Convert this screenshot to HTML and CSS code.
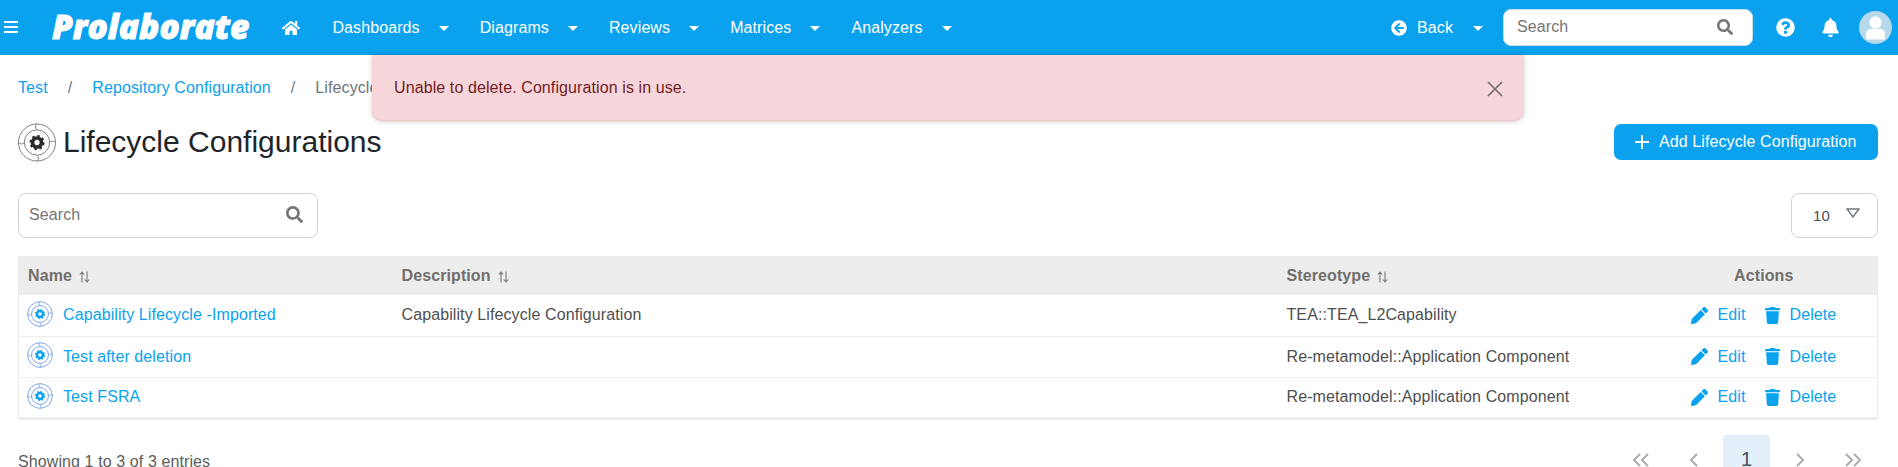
FILE: index.html
```html
<!DOCTYPE html>
<html lang="en">
<head>
<meta charset="utf-8">
<title>Lifecycle Configurations</title>
<link rel="stylesheet" href="styles.css">
</head>
<body>
<svg class="defs" width="0" height="0" aria-hidden="true">
  <symbol id="i-search" viewBox="0 0 512 512"><path d="M505 442.7L405.3 343c-4.5-4.5-10.6-7-17-7H372c27.6-35.3 44-79.7 44-128C416 93.1 322.9 0 208 0S0 93.1 0 208s93.1 208 208 208c48.3 0 92.7-16.4 128-44v16.3c0 6.4 2.5 12.5 7 17l99.7 99.7c9.4 9.4 24.6 9.4 33.9 0l28.3-28.3c9.4-9.4 9.4-24.6.1-34zM208 336c-70.7 0-128-57.2-128-128 0-70.7 57.2-128 128-128 70.7 0 128 57.2 128 128 0 70.7-57.2 128-128 128z"/></symbol>
  <symbol id="i-pencil" viewBox="0 0 512 512"><path d="M497.9 142.1l-46.1 46.1c-4.7 4.7-12.3 4.7-17 0l-111-111c-4.7-4.7-4.7-12.3 0-17l46.1-46.1c18.7-18.7 49.1-18.7 67.9 0l60.1 60.1c18.8 18.7 18.8 49.1 0 67.9zM284.2 99.8L21.6 362.4.4 483.9c-2.9 16.4 11.4 30.6 27.8 27.8l121.5-21.3 262.6-262.6c4.7-4.7 4.7-12.3 0-17l-111-111c-4.8-4.7-12.4-4.7-17.1 0z"/></symbol>
  <symbol id="i-trash" viewBox="0 0 448 512"><path d="M432 32H312l-9.4-18.7A24 24 0 0 0 281.1 0H166.8a23.72 23.72 0 0 0-21.4 13.3L136 32H16A16 16 0 0 0 0 48v32a16 16 0 0 0 16 16h416a16 16 0 0 0 16-16V48a16 16 0 0 0-16-16zM53.2 467a48 48 0 0 0 47.9 45h245.8a48 48 0 0 0 47.9-45L416 128H32z"/></symbol>
  <symbol id="i-sort" viewBox="0 0 11 12"><path d="M3 11.500V1M.8 3.500L3 1l2.200 2.500M8 .5V11M5.800 8.500L8 11l2.200-2.500"/></symbol>
  <symbol id="i-life" viewBox="0 0 40 40">
    <g class="rings">
      <circle cx="20" cy="20" r="19"/>
      <circle cx="20" cy="20" r="13"/>
      <path d="M20 1c-2 2-2 4 0 6M39 20c-2-2-4-2-6 0M20 39c2-2 2-4 0-6M1 20c2 2 4 2 6 0"/>
    </g>
    <g class="gear">
      <circle cx="20" cy="20" r="4.600" stroke-width="3.800"/>
      <circle cx="20" cy="20" r="6.800" stroke-width="2" stroke-dasharray="2.670 2.670"/>
    </g>
  </symbol>
</svg>

<header class="topbar">
  <button class="burger" aria-label="Menu"><span></span><span></span><span></span></button>
  <a class="logo">Prolaborate</a>
  <svg class="home" viewBox="0 0 576 512"><path d="M280.37 148.26L96 300.11V464a16 16 0 0 0 16 16l112.06-.29a16 16 0 0 0 15.92-16V368a16 16 0 0 1 16-16h64a16 16 0 0 1 16 16v95.64a16 16 0 0 0 16 16.05L464 480a16 16 0 0 0 16-16V300L295.67 148.26a12.19 12.19 0 0 0-15.3 0zM571.6 251.47L488 182.56V44.05a12 12 0 0 0-12-12h-56a12 12 0 0 0-12 12v72.61L318.47 43a48 48 0 0 0-61 0L4.34 251.47a12 12 0 0 0-1.6 16.9l25.5 31A12 12 0 0 0 45.15 301l235.22-193.74a12.19 12.19 0 0 1 15.3 0L530.9 301a12 12 0 0 0 16.9-1.6l25.5-31a12 12 0 0 0-1.7-16.93z"/></svg>
  <nav class="nav">
    <a class="nav-item">Dashboards<i class="caret"></i></a>
    <a class="nav-item">Diagrams<i class="caret"></i></a>
    <a class="nav-item">Reviews<i class="caret"></i></a>
    <a class="nav-item">Matrices<i class="caret"></i></a>
    <a class="nav-item">Analyzers<i class="caret"></i></a>
  </nav>
  <div class="top-right">
    <a class="back">
      <svg class="back-icon" viewBox="0 0 512 512"><path d="M256 504C119 504 8 393 8 256S119 8 256 8s248 111 248 248-111 248-248 248zm28.9-143.6L209.4 288H392c13.3 0 24-10.7 24-24v-16c0-13.3-10.7-24-24-24H209.4l75.5-72.4c9.7-9.3 9.900-24.800.4-34.300l-11-10.900c-9.400-9.400-24.600-9.400-33.900 0L107.700 239c-9.400 9.400-9.400 24.600 0 33.900l132.700 132.700c9.400 9.400 24.600 9.400 33.900 0l11-10.900c9.500-9.500 9.300-25-.4-34.300z"/></svg>
      Back<i class="caret"></i>
    </a>
    <div class="top-search">
      <span class="ph">Search</span>
      <svg class="search-icon"><use href="#i-search"/></svg>
    </div>
    <svg class="top-icon" viewBox="0 0 512 512"><path d="M504 256c0 136.997-111.043 248-248 248S8 392.997 8 256C8 119.083 119.043 8 256 8s248 111.083 248 248zM262.655 90c-54.497 0-89.255 22.957-116.549 63.758-3.536 5.286-2.353 12.415 2.715 16.258l34.699 26.31c5.205 3.947 12.621 3.008 16.665-2.122 17.864-22.658 30.113-35.797 57.303-35.797 20.429 0 45.698 13.148 45.698 32.958 0 14.976-12.363 22.667-32.534 33.976C247.128 238.528 216 254.941 216 296v4c0 6.627 5.373 12 12 12h56c6.627 0 12-5.373 12-12v-1.333c0-28.462 83.186-29.647 83.186-106.667 0-58.002-60.165-102-116.531-102zM256 338c-25.365 0-46 20.635-46 46 0 25.364 20.635 46 46 46s46-20.636 46-46c0-25.365-20.635-46-46-46z"/></svg>
    <svg class="top-icon bell" viewBox="0 0 448 512"><path d="M224 512c35.32 0 63.970-28.650 63.970-64H160.030c0 35.350 28.650 64 63.970 64zm215.390-149.710c-19.320-20.760-55.470-51.990-55.470-154.290 0-77.700-54.480-139.900-127.940-155.160V32c0-17.670-14.320-32-31.980-32s-31.980 14.330-31.980 32v20.840C118.560 68.100 64.080 130.300 64.080 208c0 102.300-36.150 133.530-55.470 154.290-6 6.450-8.660 14.160-8.610 21.710.11 16.400 12.980 32 32.100 32h383.800c19.120 0 32-15.600 32.100-32 .05-7.550-2.610-15.270-8.610-21.710z"/></svg>
    <svg class="avatar" viewBox="0 0 33 33"><circle cx="16.500" cy="16.500" r="16.500" fill="#b5d8ea"/><ellipse cx="16.500" cy="11.500" rx="6" ry="6.300" fill="#fff"/><path d="M7 27v-4c0-3 2.500-5 5.500-5h8c3 0 5.500 2 5.500 5v4c0 1-1 1.500-2 1.500H9c-1 0-2-.5-2-1.500z" fill="#fff"/></svg>
  </div>
</header>

<div class="alert">
  <span>Unable to delete. Configuration is in use.</span>
  <svg class="alert-close" viewBox="0 0 16 16"><path d="M1 1l14 14M15 1L1 15"/></svg>
</div>

<main class="page">
  <ol class="crumbs">
    <li><a>Test</a></li>
    <li class="sep">/</li>
    <li><a>Repository Configuration</a></li>
    <li class="sep">/</li>
    <li class="current">Lifecycle</li>
  </ol>

  <div class="title-row">
    <h1 class="title"><svg class="title-icon"><use href="#i-life"/></svg>Lifecycle Configurations</h1>
    <button class="add-btn"><svg class="plus" viewBox="0 0 14 14"><path d="M7 0v14M0 7h14"/></svg>Add Lifecycle Configuration</button>
  </div>

  <div class="tools">
    <div class="search-box">
      <span class="ph">Search</span>
      <svg class="search-icon big"><use href="#i-search"/></svg>
    </div>
    <div class="page-size">10<svg class="tri" viewBox="0 0 14 10"><path d="M1 1h12L7 9z"/></svg></div>
  </div>

  <table class="grid">
    <colgroup><col class="c1"><col class="c2"><col class="c3"><col class="c4"></colgroup>
    <thead>
      <tr>
        <th>Name<svg class="sort"><use href="#i-sort"/></svg></th>
        <th>Description<svg class="sort"><use href="#i-sort"/></svg></th>
        <th>Stereotype<svg class="sort"><use href="#i-sort"/></svg></th>
        <th class="center">Actions</th>
      </tr>
    </thead>
    <tbody>
      <tr>
        <td><a class="name"><svg class="row-icon"><use href="#i-life"/></svg>Capability Lifecycle -Imported</a></td>
        <td>Capability Lifecycle Configuration</td>
        <td>TEA::TEA_L2Capability</td>
        <td><div class="acts"><a class="act"><svg class="pen"><use href="#i-pencil"/></svg>Edit</a><a class="act"><svg class="bin"><use href="#i-trash"/></svg>Delete</a></div></td>
      </tr>
      <tr>
        <td><a class="name"><svg class="row-icon"><use href="#i-life"/></svg>Test after deletion</a></td>
        <td></td>
        <td>Re-metamodel::Application Component</td>
        <td><div class="acts"><a class="act"><svg class="pen"><use href="#i-pencil"/></svg>Edit</a><a class="act"><svg class="bin"><use href="#i-trash"/></svg>Delete</a></div></td>
      </tr>
      <tr>
        <td><a class="name"><svg class="row-icon"><use href="#i-life"/></svg>Test FSRA</a></td>
        <td></td>
        <td>Re-metamodel::Application Component</td>
        <td><div class="acts"><a class="act"><svg class="pen"><use href="#i-pencil"/></svg>Edit</a><a class="act"><svg class="bin"><use href="#i-trash"/></svg>Delete</a></div></td>
      </tr>
    </tbody>
  </table>

  <div class="foot">
    <span class="info">Showing 1 to 3 of 3 entries</span>
    <div class="pager">
      <span class="pg-item"><svg class="pg" viewBox="0 0 18 14"><path d="M8 1L2 7l6 6M16 1l-6 6 6 6"/></svg></span>
      <span class="pg-item"><svg class="pg" viewBox="0 0 18 14"><path d="M12 1L6 7l6 6"/></svg></span>
      <span class="pg-item pg-cur">1</span>
      <span class="pg-item"><svg class="pg" viewBox="0 0 18 14"><path d="M6 1l6 6-6 6"/></svg></span>
      <span class="pg-item"><svg class="pg" viewBox="0 0 18 14"><path d="M2 1l6 6-6 6M10 1l6 6-6 6"/></svg></span>
    </div>
  </div>
</main>
</body>
</html>
```

FILE: styles.css
```css
* { box-sizing: border-box; }
html, body { margin: 0; height: 100%; }
body {
  position: relative;
  height: 467px;
  overflow: hidden;
  background: #fff;
  color: #495057;
  font-family: "Liberation Sans", Arial, sans-serif;
  font-size: 16px;
  letter-spacing: .1px;
}
.defs { position: absolute; }
a { color: #0aa2ef; text-decoration: none; }

.topbar {
  display: flex;
  align-items: center;
  height: 55px;
  background: #0aa2ef;
  color: #fff;
  border-bottom: 1px solid #0c96dc;
}
.burger {
  display: flex;
  flex-direction: column;
  gap: 3px;
  width: 14px;
  margin-left: 4px;
  padding: 0;
  background: none;
  border: 0;
}
.burger span { display: block; height: 2px; background: #fff; }
.logo {
  margin-left: 34px;
  color: #fff;
  font-family: "Open Sans", sans-serif;
  font-style: italic;
  font-weight: 800;
  font-size: 33.5px;
  letter-spacing: 0;
  line-height: 1;
  -webkit-text-stroke: .9px #fff;
}
.home { width: 18px; height: 16px; margin-left: 33px; margin-top: 2px; fill: #fff; }
.nav { display: flex; margin-left: 32px; padding-top: 2px; }
.nav-item { display: flex; align-items: center; color: #fff; font-size: 16px; margin-right: 31px; }
.caret {
  width: 0; height: 0;
  margin-left: 19px;
  border-left: 5px solid transparent;
  border-right: 5px solid transparent;
  border-top: 5px solid #fff;
}
.top-right { display: flex; align-items: center; margin-left: auto; }
.back { display: flex; align-items: center; color: #fff; font-size: 16px; padding-top: 2px; }
.back-icon { width: 16px; height: 16px; margin-right: 10px; fill: #fff; }
.back .caret { margin-left: 20px; }
.top-search {
  display: flex;
  align-items: center;
  justify-content: space-between;
  width: 250px;
  height: 37px;
  margin-left: 20px;
  padding: 0 19px 0 13px;
  background: #fff;
  border: 1px solid #c9dbe6;
  border-radius: 8px;
}
.ph { color: #757575; font-size: 16px; }
.search-icon { width: 16px; height: 16px; fill: #757575; }
.search-icon.big { width: 17px; height: 17px; }
.top-icon { width: 19px; height: 19px; margin-left: 23px; fill: #fff; }
.top-icon.bell { width: 17px; margin-left: 27px; }
.avatar { width: 33px; height: 33px; margin-left: 20px; margin-right: 6px; }

.alert {
  position: absolute;
  top: 55px;
  left: 372px;
  display: flex;
  align-items: center;
  justify-content: space-between;
  width: 1152px;
  height: 66px;
  padding: 0 21px 0 22px;
  background: #f6d6da;
  color: #721c24;
  font-size: 16px;
  border-bottom: 1px solid #f1c3c8;
  border-radius: 0 0 10px 10px;
  box-shadow: 0 1px 4px rgba(0, 0, 0, .18);
}
.alert-close { width: 16px; height: 16px; margin-top: 2px; fill: none; stroke: #7b6b6e; stroke-width: 1.700; }

.page { padding: 0 20px 0 18px; }
.crumbs {
  display: flex;
  margin: 0;
  padding: 24px 0 0;
  list-style: none;
  font-size: 16px;
  line-height: 18px;
}
.sep { margin: 0 20px; color: #6c757d; }
.current { color: #6c757d; }

.title-row {
  display: flex;
  align-items: center;
  justify-content: space-between;
  margin-top: 21px;
  height: 48px;
}
.title {
  display: flex;
  align-items: center;
  margin: 0 0 0 -1px;
  font-weight: 400;
  font-size: 30px;
  letter-spacing: 0;
  color: #212529;
}
.title-icon {
  width: 40px;
  height: 39px;
  margin-right: 6px;
  color: #2b2b2b;
  --ring: #7c7c7c;
}
.add-btn {
  display: flex;
  align-items: center;
  width: 264px;
  height: 36px;
  padding: 0 0 0 21px;
  background: #0aa2ef;
  color: #fff;
  border: 0;
  border-radius: 7px;
  font: 16px "Liberation Sans", Arial, sans-serif;
  letter-spacing: .1px;
}
.plus { width: 14px; height: 14px; margin-right: 10px; stroke: #fff; stroke-width: 2; }
.rings { fill: none; stroke: var(--ring); stroke-width: var(--ring-w, 1); }
.gear { fill: none; stroke: currentColor; }

.tools { display: flex; justify-content: space-between; margin-top: 27px; }
.search-box {
  display: flex;
  align-items: center;
  justify-content: space-between;
  width: 300px;
  height: 45px;
  padding: 0 14px 2px 10px;
  border: 1px solid #cfd3d6;
  border-radius: 8px;
}
.page-size {
  display: flex;
  align-items: center;
  justify-content: space-between;
  width: 87px;
  height: 45px;
  padding: 0 17px 0 21px;
  border: 1px solid #cfd3d6;
  border-radius: 8px;
  color: #495057;
  font-size: 15px;
}
.tri { width: 14px; height: 10px; margin-top: -6px; fill: none; stroke: #6c757d; stroke-width: 1.400; }

.grid {
  width: 100%;
  margin-top: 18px;
  border-collapse: collapse;
  table-layout: fixed;
  border-left: 1px solid #ededed;
  border-right: 1px solid #ededed;
  border-bottom: 3px solid #ededed;
}
.c1 { width: 374px; }
.c2 { width: 885px; }
.c3 { width: 365px; }
th {
  height: 39px;
  padding: 0 0 0 9px;
  background: #ededed;
  color: #726e6b;
  font-size: 16px;
  font-weight: 700;
  text-align: left;
}
th.center { text-align: center; padding: 0 0 0 8px; }
.sort {
  width: 11px;
  height: 12px;
  margin-left: 7px;
  vertical-align: -2px;
  fill: none;
  stroke: #7d7a78;
  stroke-width: 1.100;
}
td {
  height: 41px;
  padding: 0 0 0 9px;
  border-bottom: 1px solid #ededed;
  font-size: 16px;
  color: #4f4f4f;
}
td:first-child { padding-left: 8px; }
tbody tr:last-child td { border-bottom: 0; }
.name { display: flex; align-items: center; }
.row-icon {
  width: 26px;
  height: 26px;
  margin-top: -3px;
  margin-right: 10px;
  color: #0aa2ef;
  --ring: #7fa4ee;
  --ring-w: 1.500;
}
.acts { display: flex; gap: 20px; padding-left: 39px; }
.act { display: flex; align-items: center; }
.pen { width: 17px; height: 17px; margin-right: 10px; fill: #0aa2ef; }
.bin { width: 15px; height: 17px; margin-right: 9px; fill: #0aa2ef; }

.foot { display: flex; justify-content: space-between; margin-top: 15px; }
.info { margin-top: 18px; color: #5c5c5c; font-size: 16px; }
.pager { display: flex; gap: 6px; margin-right: 2px; }
.pg-item {
  display: flex;
  align-items: center;
  justify-content: center;
  width: 47px;
  height: 50px;
}
.pg { width: 18px; height: 14px; fill: none; stroke: #a9adb0; stroke-width: 2; }
.pg-cur {
  background: #e3f0fa;
  border-radius: 4px;
  font-size: 20px;
}
```
